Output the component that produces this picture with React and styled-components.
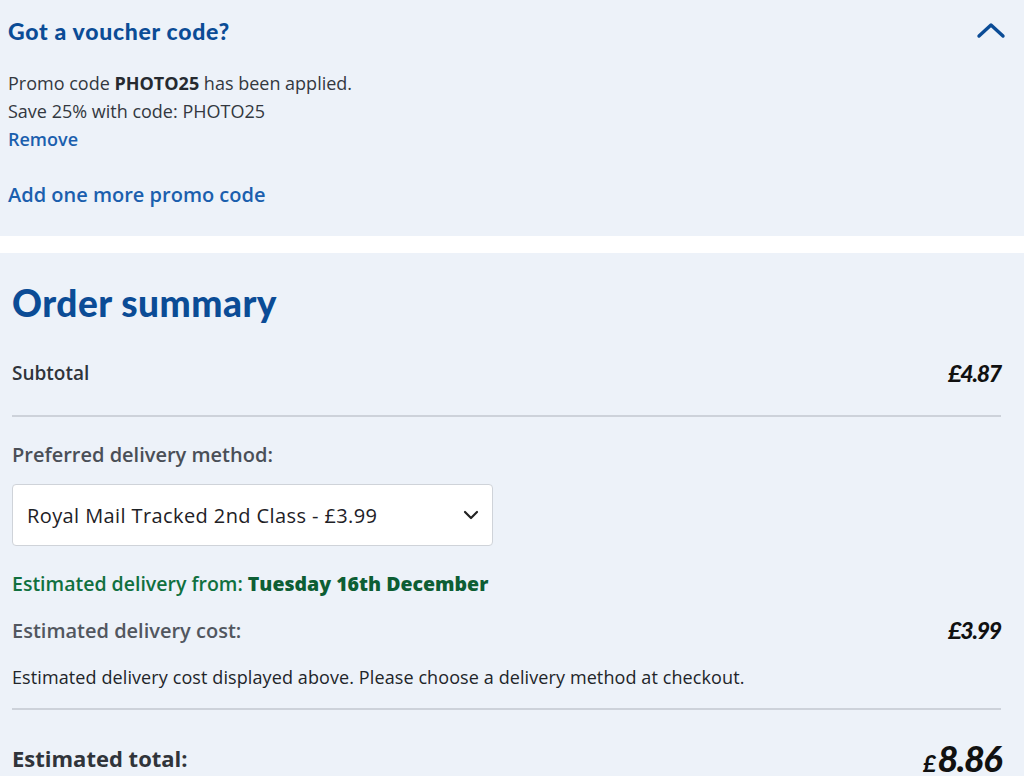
import React from "react";
import styled, { createGlobalStyle } from "styled-components";

const GlobalStyle = createGlobalStyle`
  html, body {
    margin: 0;
    padding: 0;
    background: #ffffff;
    font-family: "Open Sans", Lato, sans-serif;
  }
`;

const App = () => {
  return (
    <Page>
      <GlobalStyle />
      <VoucherPanel>
        <VoucherHeader>
          <VoucherTitle>Got a voucher code?</VoucherTitle>
          <Chevron width="30" height="18" viewBox="0 0 30 18">
            <path d="M3 15 L15 4 L27 15" fill="none" stroke="#0b4c96" strokeWidth="3.4" strokeLinecap="round" strokeLinejoin="round" />
          </Chevron>
        </VoucherHeader>
        <PromoText>
          Promo code <strong>PHOTO25</strong> has been applied.
        </PromoText>
        <PromoText>Save 25% with code: PHOTO25</PromoText>
        <LinkText small>Remove</LinkText>
        <LinkText>Add one more promo code</LinkText>
      </VoucherPanel>

      <SummaryPanel>
        <SummaryTitle>Order summary</SummaryTitle>
        <Row>
          <RowLabel>Subtotal</RowLabel>
          <Price>£4.87</Price>
        </Row>
        <Divider />
        <FieldLabel>Preferred delivery method:</FieldLabel>
        <SelectBox>
          <span>Royal Mail Tracked 2nd Class - £3.99</span>
          <svg width="16" height="10" viewBox="0 0 16 10">
            <path d="M2 2 L8 8 L14 2" fill="none" stroke="#222" strokeWidth="2.2" strokeLinecap="round" strokeLinejoin="round" />
          </svg>
        </SelectBox>
        <DeliveryDate>
          Estimated delivery from: <strong>Tuesday 16th December</strong>
        </DeliveryDate>
        <Row cost>
          <RowLabel muted>Estimated delivery cost:</RowLabel>
          <Price>£3.99</Price>
        </Row>
        <Note>Estimated delivery cost displayed above. Please choose a delivery method at checkout.</Note>
        <Divider tight />
        <Row total>
          <TotalLabel>Estimated total:</TotalLabel>
          <TotalPrice>
            <small>£</small>8.86
          </TotalPrice>
        </Row>
      </SummaryPanel>
    </Page>
  );
};

export default App;

const Page = styled.div`
  width: 1024px;
  height: 776px;
  overflow: hidden;
  display: flex;
  flex-direction: column;
  gap: 17px;
  background: #ffffff;
`;

const VoucherPanel = styled.section`
  background: #edf2f9;
  height: 236px;
  flex-shrink: 0;
  box-sizing: border-box;
  padding: 16px 18px 0 8px;
  display: flex;
  flex-direction: column;
`;

const VoucherHeader = styled.div`
  display: flex;
  justify-content: space-between;
  align-items: center;
  margin-bottom: 23px;
`;

const VoucherTitle = styled.h2`
  margin: 0;
  font-family: Lato, sans-serif;
  font-size: 23px;
  font-weight: 900;
  letter-spacing: 0.7px;
  color: #0b4c96;
  line-height: 30px;
`;

const Chevron = styled.svg`
  display: block;
  margin-top: -2px;
`;

const PromoText = styled.p`
  margin: 0;
  font-size: 18px;
  line-height: 28px;
  color: #333840;

  strong {
    font-weight: 700;
    color: #262a30;
  }
`;

const LinkText = styled.a`
  display: block;
  font-size: ${(p) => (p.small ? "18px" : "20px")};
  font-weight: 600;
  color: #1b5fae;
  line-height: 28px;
  margin-top: ${(p) => (p.small ? "0" : "28px")};
  cursor: pointer;
`;

const SummaryPanel = styled.section`
  flex: 1;
  background: #edf2f9;
  padding: 28px 23px 0 12px;
  display: flex;
  flex-direction: column;
`;

const SummaryTitle = styled.h1`
  margin: 0 0 30px;
  font-family: Lato, sans-serif;
  font-size: 37px;
  font-weight: 900;
  letter-spacing: 0.5px;
  color: #0b4c96;
  line-height: 44px;
`;

const Row = styled.div`
  display: flex;
  justify-content: space-between;
  align-items: center;
  min-height: ${(p) => (p.total ? "44px" : "36px")};
  margin-top: ${(p) => (p.total ? "26px" : p.cost ? "14px" : "0")};
  margin-bottom: ${(p) => (p.cost ? "17px" : "0")};
`;

const RowLabel = styled.span`
  font-size: ${(p) => (p.muted ? "20px" : "19px")};
  font-weight: 600;
  color: ${(p) => (p.muted ? "#52575f" : "#30343a")};
`;

const Price = styled.span`
  font-family: Lato, sans-serif;
  font-size: 23px;
  font-weight: 900;
  font-style: italic;
  letter-spacing: -1.2px;
  color: #111;
`;

const Divider = styled.hr`
  margin: ${(p) => (p.tight ? "19px" : "24px")} 0 0;
  border: 0;
  height: 2px;
  background: #cdd2da;
`;

const FieldLabel = styled.div`
  margin-top: 24px;
  font-size: 20px;
  font-weight: 600;
  color: #4a4f57;
  line-height: 28px;
`;

const SelectBox = styled.div`
  margin-top: 15px;
  width: 481px;
  height: 62px;
  box-sizing: border-box;
  background: #ffffff;
  border: 1px solid #cfd3d9;
  border-radius: 4px;
  display: flex;
  align-items: center;
  justify-content: space-between;
  padding: 0 13px 0 14px;
  font-size: 20px;
  letter-spacing: 0.4px;
  color: #1e2126;
`;

const DeliveryDate = styled.div`
  margin-top: 24px;
  font-size: 19.5px;
  font-weight: 600;
  color: #10703f;
  line-height: 28px;

  strong {
    font-weight: 800;
    color: #0d5e34;
  }
`;

const Note = styled.p`
  margin: 0;
  font-size: 18px;
  letter-spacing: 0.1px;
  color: #222529;
  line-height: 24px;
`;

const TotalLabel = styled.span`
  font-size: 22px;
  font-weight: 700;
  color: #30343a;
`;

const TotalPrice = styled.span`
  font-family: Lato, sans-serif;
  font-size: 36px;
  line-height: 1;
  font-weight: 900;
  font-style: italic;
  letter-spacing: -1.5px;
  color: #111;

  small {
    font-size: 22px;
    margin-right: 3px;
  }
`;
